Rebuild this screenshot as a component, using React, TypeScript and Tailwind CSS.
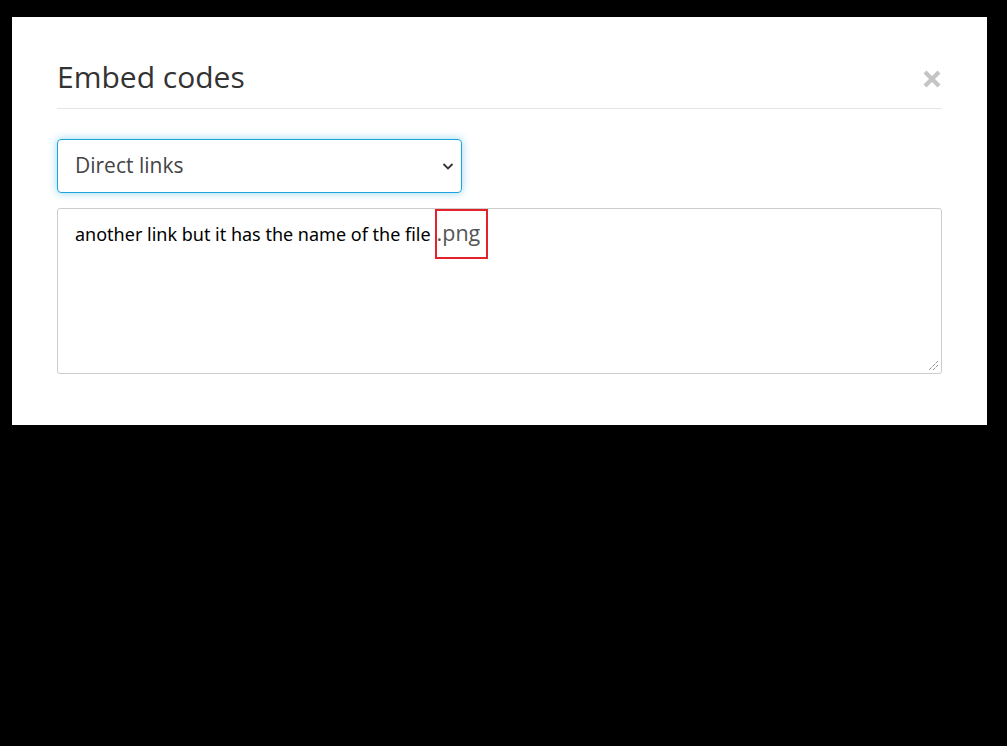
import React from 'react';

const EmbedModal = () => {
  return (
    <div className="w-[975px] h-[408px] bg-white px-[45px] pt-[21px]">
      <div className="flex items-end justify-between border-b border-[#e5e5e5] pb-[11px] h-[71px]">
        <h4 className="text-[30px] leading-[40px] text-[#333] font-['Open_Sans',sans-serif]">Embed codes</h4>
        <button className="text-[#c4c4c4] mb-[8px]">
          <svg width="20" height="20" viewBox="0 0 20 20">
            <path d="M3 3 L17 17 M17 3 L3 17" stroke="currentColor" strokeWidth="4.2" strokeLinecap="butt" />
          </svg>
        </button>
      </div>

      <div className="mt-[30px] w-[405px] h-[54px] rounded-[4px] border border-[#1ba5dc] shadow-[0_0_8px_rgba(27,165,220,0.45)] flex items-center justify-between pl-[17px] pr-[6px]">
        <span className="text-[21px] text-[#444] font-['Open_Sans',sans-serif]">Direct links</span>
        <svg width="14" height="14" viewBox="0 0 14 14" className="text-[#333]">
          <path d="M2.5 5 L7 9.5 L11.5 5" fill="none" stroke="currentColor" strokeWidth="1.8" />
        </svg>
      </div>

      <div className="relative mt-[15px] h-[166px] border border-[#ccc] rounded-[3px] pl-[17px]">
        <div className="flex items-start">
          <span className="mt-[13px] text-[18px] leading-[24px] text-black font-['Noto_Sans',sans-serif]">another link but it has the name of the file</span>
          <span className="ml-[4px] w-[53px] h-[50px] border-2 border-[#e3222a] pt-[8px] text-[21.5px] leading-[28px] text-[#555] font-['Open_Sans',sans-serif]">.png</span>
        </div>
        <svg width="12" height="12" viewBox="0 0 12 12" className="absolute right-[2px] bottom-[2px] text-[#555]">
          <path d="M11 2 L2 11 M11 6 L6 11" stroke="currentColor" strokeWidth="1" strokeDasharray="1 1" />
        </svg>
      </div>
    </div>
  );
};

const App = () => {
  return (
    <div className="min-h-[746px] w-[1007px] bg-black pt-[17px] pl-[12px]">
      <EmbedModal />
    </div>
  );
};

export default App;
